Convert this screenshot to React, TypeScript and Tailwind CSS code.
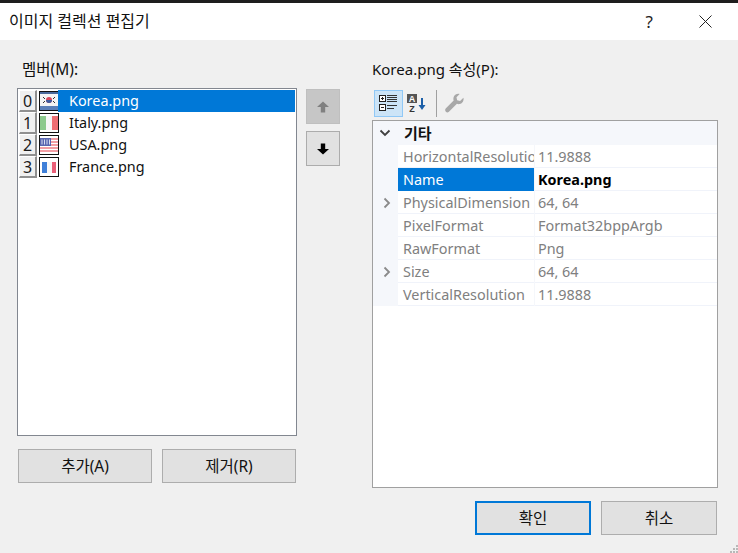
const font = "font-['Noto_Sans','Noto_Sans_CJK_KR',sans-serif]";

const members = [
  { index: 0, name: "Korea.png", flag: "korea" },
  { index: 1, name: "Italy.png", flag: "italy" },
  { index: 2, name: "USA.png", flag: "usa" },
  { index: 3, name: "France.png", flag: "france" },
];

const props = [
  { name: "HorizontalResolution", value: "11.9888" },
  { name: "Name", value: "Korea.png", selected: true },
  { name: "PhysicalDimension", value: "64, 64", expand: true },
  { name: "PixelFormat", value: "Format32bppArgb" },
  { name: "RawFormat", value: "Png" },
  { name: "Size", value: "64, 64", expand: true },
  { name: "VerticalResolution", value: "11.9888" },
];

function Flag({ kind }: { kind: string }) {
  return (
    <svg width="20" height="20" viewBox="0 0 20 20" className="shrink-0">
      <rect x="0" y="0" width="20" height="20" fill="#111111" />
      <rect x="1" y="1" width="18" height="18" fill="#ffffff" />
      {kind === "korea" && (
        <g>
          <rect x="1" y="1" width="18" height="2" fill="#4a6a9c" />
          <rect x="1" y="15" width="18" height="4" fill="#5a7fb8" />
          <rect x="1" y="3" width="18" height="12" fill="#f4f4f4" />
          <circle cx="10" cy="9" r="3" fill="#d8485c" />
          <path d="M7 9a3 3 0 0 0 6 0z" fill="#3c5aa0" />
          <path d="M4 6l2 2M14 8l2-2M4 12l2-2M14 10l2 2" stroke="#333333" strokeWidth="1" />
        </g>
      )}
      {kind === "italy" && (
        <g>
          <rect x="1" y="3" width="6" height="14" fill="#8cc98c" />
          <rect x="7" y="3" width="6" height="14" fill="#f6f6f6" />
          <rect x="13" y="3" width="6" height="14" fill="#ee6e72" />
        </g>
      )}
      {kind === "usa" && (
        <g>
          <path d="M1 4h18M1 7h18M1 10h18M1 13h18M1 16h18" stroke="#ee7f86" strokeWidth="1.5" />
          <rect x="1" y="3" width="11" height="8" fill="#5a66b0" />
          <path d="M3 4.5v5M5.5 4.5v5M8 4.5v5M10.5 4.5v5" stroke="#d8dcf0" strokeWidth="1" />
        </g>
      )}
      {kind === "france" && (
        <g>
          <rect x="3" y="5" width="5" height="11" fill="#3f7fd8" />
          <rect x="8" y="5" width="5" height="11" fill="#f8f8f8" />
          <rect x="13" y="5" width="4" height="11" fill="#ea5f78" />
        </g>
      )}
    </svg>
  );
}

function MemberRow({ index, name, flag }: { index: number; name: string; flag: string }) {
  const selected = index === 0;
  return (
    <div className="flex h-[22px] items-center">
      <div className="flex h-[22px] w-[18px] shrink-0 items-center justify-center border-t border-l border-t-white border-l-white border-r-2 border-b-2 border-r-[#8f8f8f] border-b-[#8f8f8f] bg-[#f0f0f0] text-[16px] text-[#1a1a1a]">
        {index}
      </div>
      <div className="ml-[2px]">
        <Flag kind={flag} />
      </div>
      <div className={`-ml-[1px] flex h-[22px] flex-1 items-center pl-[11px] ${selected ? "bg-[#0078d7] text-white" : "text-[#111111]"}`}>
        <span className="text-[14.4px] leading-none">{name}</span>
      </div>
    </div>
  );
}

function ArrowButton({ dir, disabled }: { dir: "up" | "down"; disabled?: boolean }) {
  return (
    <div className={`flex h-[35px] w-[34px] items-center justify-center border ${disabled ? "border-[#bfbfbf] bg-[#c6c6c6]" : "border-[#acacac] bg-[#e1e1e1]"}`}>
      <svg width="12" height="12" viewBox="0 0 12 12">
        <path
          d={dir === "up" ? "M6 0.5L12 6H8.2V11.5H3.8V6H0z" : "M6 11.5L12 6H8.2V0.5H3.8V6H0z"}
          fill={disabled ? "#808080" : "#000000"}
        />
      </svg>
    </div>
  );
}

function DialogButton({ label, width, primary }: { label: string; width: string; primary?: boolean }) {
  return (
    <div className={`flex h-[34px] items-center justify-center bg-[#e1e1e1] pt-[1px] text-[15.5px] leading-none text-[#111111] ${width} ${primary ? "border-2 border-[#0078d7]" : "border border-[#adadad]"}`}>
      {label}
    </div>
  );
}

function Chevron({ open }: { open?: boolean }) {
  return (
    <svg width="12" height="12" viewBox="0 0 12 12" fill="none">
      <path
        d={open ? "M1.5 3.5L6 8L10.5 3.5" : "M3.5 1.5L8 6L3.5 10.5"}
        stroke={open ? "#404040" : "#8a8a8a"}
        strokeWidth="1.8"
      />
    </svg>
  );
}

function ToolbarIcons() {
  return (
    <div className="flex h-[28px] items-center">
      <div className="flex h-[27px] w-[29px] items-center justify-center border border-[#90c8f6] bg-[#cce4f7]">
        <svg width="19" height="18" viewBox="0 0 19 18">
          <rect x="0.5" y="1.5" width="6" height="6" fill="#ffffff" stroke="#222222" />
          <path d="M2 4.5h3M3.5 3v3" stroke="#222222" />
          <rect x="0.5" y="10.5" width="6" height="6" fill="#ffffff" stroke="#222222" />
          <path d="M2 13.5h3" stroke="#222222" />
          <path d="M8 1.5h10M8 3.5h10M8 5.5h10M8 7.5h10M8 11.5h10M8 14.5h7" stroke="#333333" />
        </svg>
      </div>
      <div className="flex h-[27px] w-[28px] items-center justify-center">
        <svg width="20" height="20" viewBox="0 0 20 20">
          <rect x="0" y="1" width="10" height="9" fill="#555555" />
          <text x="5" y="8.5" textAnchor="middle" fontSize="9" fontWeight="700" fill="#ffffff" fontFamily="Liberation Sans">A</text>
          <text x="5" y="19" textAnchor="middle" fontSize="9" fontWeight="700" fill="#333333" fontFamily="Liberation Sans">Z</text>
          <path d="M15 5v10" stroke="#1c5fa8" strokeWidth="2" />
          <path d="M11.5 12l3.5 5 3.5-5z" fill="#1c5fa8" />
        </svg>
      </div>
      <div className="mx-[5px] h-[27px] w-px bg-[#a0a0a0]" />
      <div className="flex h-[27px] w-[24px] items-center justify-center">
        <svg width="21" height="21" viewBox="0 0 20 20">
          <path
            d="M18.5 4.5l-3.2 3-2.8-.6-.6-2.8 3-3.2c-2.6-.6-5.4 1-5.9 3.6-.2 1-.1 1.9.2 2.7l-7.6 7.6a2.2 2.2 0 0 0 3.1 3.1l7.6-7.6c.9.3 1.8.4 2.7.2 2.6-.5 4.2-3.3 3.5-6z"
            fill="#a8a8a8"
          />
        </svg>
      </div>
    </div>
  );
}

export default function App() {
  return (
    <div className={`relative flex h-[553px] w-[738px] flex-col overflow-hidden bg-[#f0f0f0] ${font}`}>
      <div className="h-[3px] bg-[#1e1e1e]" />
      <div className="flex h-[37px] items-center justify-between bg-white pl-[9px] pr-[26px]">
        <span className="-mt-[2px] text-[16px] text-[#111111]">이미지 컬렉션 편집기</span>
        <div className="flex items-center gap-[46px]">
          <span className="text-[17px] leading-none text-[#222222]">?</span>
          <svg width="13" height="13" viewBox="0 0 13 13">
            <path d="M0.5 0.5L12.5 12.5M12.5 0.5L0.5 12.5" stroke="#222222" strokeWidth="1" />
          </svg>
        </div>
      </div>

      <div className="flex flex-1">
        <div className="ml-[17px] flex w-[280px] flex-col">
          <div className="mt-[18px] ml-[5px] h-[30px] text-[15.5px] leading-[22px] text-[#111111]">멤버(M):</div>
          <div className="h-[348px] border border-[#828790] bg-white p-[1px] pr-[1px]">
            {members.map((m) => (
              <MemberRow key={m.index} index={m.index} name={m.name} flag={m.flag} />
            ))}
          </div>
          <div className="mt-[13px] ml-[1px] flex gap-[10px]">
            <DialogButton label="추가(A)" width="w-[134px]" />
            <DialogButton label="제거(R)" width="w-[134px]" />
          </div>
        </div>

        <div className="mt-[49px] ml-[9px] flex w-[34px] flex-col gap-[7px]">
          <ArrowButton dir="up" disabled />
          <ArrowButton dir="down" />
        </div>

        <div className="ml-[32px] flex w-[346px] flex-col">
          <div className="mt-[18px] h-[30px] text-[15px] leading-[22px] text-[#111111]">Korea.png 속성(P):</div>
          <div className="ml-[2px] h-[32px] pt-[1px]">
            <ToolbarIcons />
          </div>
          <div className="h-[368px] border border-[#a0a0a0] bg-white">
            <div className="flex h-[24px] items-center bg-[#f5f7fb] pl-[6px]">
              <Chevron open />
              <span className="ml-[13px] text-[15px] font-bold leading-none text-[#111111]">기타</span>
            </div>
            {props.map((p) => (
              <div key={p.name} className="flex h-[23px] bg-[#f5f7fb]">
                <div className="flex w-[25px] shrink-0 items-center pl-[8px]">
                  {p.expand && <Chevron />}
                </div>
                <div className={`flex w-[136px] shrink-0 items-center overflow-hidden whitespace-nowrap pl-[5px] pt-[1px] text-[14.4px] ${p.selected ? "border-b border-[#0078d7] bg-[#0078d7] text-white" : "border-b border-[#f0f3fa] bg-white text-[#808080]"}`}>
                  {p.name}
                </div>
                <div className={`ml-[1px] flex flex-1 items-center border-b border-[#f0f3fa] bg-white pl-[3px] pt-[1px] text-[14.4px] ${p.selected ? "font-bold text-black" : "text-[#808080]"}`}>
                  {p.value}
                </div>
              </div>
            ))}
          </div>
          <div className="mt-[13px] ml-[103px] flex gap-[10px]">
            <DialogButton label="확인" width="w-[116px]" primary />
            <DialogButton label="취소" width="w-[116px]" />
          </div>
        </div>
      </div>

      <svg width="8" height="8" viewBox="0 0 8 8" className="absolute right-0 bottom-0">
        <path d="M6 0h2v2H6zM3 3h2v2H3zM6 3h2v2H6zM0 6h2v2H0zM3 6h2v2H3zM6 6h2v2H6z" fill="#b8b8b8" />
      </svg>
    </div>
  );
}
